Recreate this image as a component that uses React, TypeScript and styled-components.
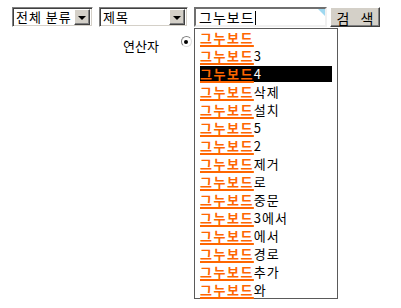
import React from "react";
import { styled, createGlobalStyle } from "styled-components";

const GlobalStyle = createGlobalStyle`
  html, body {
    margin: 0;
    padding: 0;
    background: #ffffff;
    font-family: "Noto Sans CJK KR", "Noto Sans", sans-serif;
    font-size: 12px;
    color: #000000;
  }
`;

const Page = styled.div`
  position: relative;
  width: 401px;
  height: 308px;
  overflow: hidden;
`;

const SearchBar = styled.div`
  display: flex;
  align-items: center;
  padding: 7px 0 0 12px;
  height: 20px;
`;

const SelectBox = styled.div<{ $width: number; $gap: number }>`
  display: flex;
  align-items: center;
  justify-content: space-between;
  box-sizing: border-box;
  width: ${({ $width }) => $width}px;
  height: 20px;
  margin-right: ${({ $gap }) => $gap}px;
  border: 1px solid;
  border-color: #808080 #ffffff #ffffff #808080;
  box-shadow: inset 1px 1px 0 #404040, inset -1px -1px 0 #d4d0c8;
  background: #ffffff;
  padding: 0 2px 0 3px;
  line-height: 16px;
  font-size: 13px;
  letter-spacing: 1px;
  white-space: nowrap;
`;

const ArrowButton = styled.span`
  display: flex;
  align-items: center;
  justify-content: center;
  box-sizing: border-box;
  width: 16px;
  height: 16px;
  background: #d4d0c8;
  border: 1px solid;
  border-color: #ffffff #404040 #404040 #ffffff;
  box-shadow: inset -1px -1px 0 #808080;

  &::after {
    content: "";
    border-left: 4px solid transparent;
    border-right: 4px solid transparent;
    border-top: 4px solid #000000;
    margin-top: 1px;
  }
`;

const QueryInput = styled.div`
  position: relative;
  box-sizing: border-box;
  width: 133px;
  height: 20px;
  margin-right: 3px;
  border: 2px solid;
  border-color: #6f6f6f #f0f0f0 #f0f0f0 #6f6f6f;
  background: #ffffff;
  padding: 0 3px;
  line-height: 16px;
  font-size: 14px;
  letter-spacing: 1px;

  &::after {
    content: "";
    position: absolute;
    top: 0;
    right: 0;
    border-top: 7px solid #9fd8f0;
    border-left: 7px solid transparent;
  }
`;

const Caret = styled.span`
  display: inline-block;
  width: 1px;
  height: 14px;
  background: #000000;
  vertical-align: -2px;
`;

const SearchButton = styled.button`
  box-sizing: border-box;
  width: 50px;
  height: 20px;
  padding: 0;
  background: #d4d0c8;
  border: 1px solid;
  border-color: #ffffff #404040 #404040 #ffffff;
  box-shadow: inset -1px -1px 0 #808080;
  font-family: inherit;
  font-size: 14px;
  letter-spacing: 4px;
  text-indent: 4px;
  color: #000000;
`;

const OperatorRow = styled.div`
  display: flex;
  align-items: center;
  gap: 22px;
  padding: 9px 0 0 123px;
  font-size: 13px;
`;

const Radio = styled.span`
  display: flex;
  align-items: center;
  justify-content: center;
  box-sizing: border-box;
  width: 11px;
  height: 11px;
  margin-top: -8px;
  border-radius: 50%;
  border: 1px solid;
  border-color: #808080 #e0e0e0 #e0e0e0 #808080;
  background: #ffffff;

  &::after {
    content: "";
    width: 4px;
    height: 4px;
    border-radius: 50%;
    background: #000000;
  }
`;

const Suggestions = styled.ul`
  position: absolute;
  left: 194px;
  top: 28px;
  box-sizing: border-box;
  width: 144px;
  height: 271px;
  margin: 0;
  padding: 1px 5px 0;
  list-style: none;
  background: #ffffff;
  border: 1px solid #5a5a5a;
`;

const Suggestion = styled.li<{ $active?: boolean }>`
  height: 16px;
  margin-bottom: 2px;
  line-height: 16px;
  font-size: 13px;
  letter-spacing: 1px;
  white-space: nowrap;
  background: ${({ $active }) => ($active ? "#000000" : "transparent")};
  color: ${({ $active }) => ($active ? "#ffffff" : "#000000")};
`;

const Match = styled.span`
  color: #ff6600;
  font-weight: bold;
  letter-spacing: 1.5px;
  text-decoration: underline;
  text-underline-offset: 2px;
  text-decoration-thickness: 2px;
`;

const suffixes = [
  "",
  "3",
  "4",
  "삭제",
  "설치",
  "5",
  "2",
  "제거",
  "로",
  "중문",
  "3에서",
  "에서",
  "경로",
  "추가",
  "와",
];

export default function App() {
  return (
    <Page>
      <GlobalStyle />
      <SearchBar>
        <SelectBox $width={81} $gap={6}>
          전체 분류
          <ArrowButton />
        </SelectBox>
        <SelectBox $width={89} $gap={6}>
          제목
          <ArrowButton />
        </SelectBox>
        <QueryInput>
          그누보드
          <Caret />
        </QueryInput>
        <SearchButton>검 색</SearchButton>
      </SearchBar>
      <OperatorRow>
        연산자
        <Radio />
      </OperatorRow>
      <Suggestions>
        {suffixes.map((s, i) => (
          <Suggestion key={i} $active={i === 2}>
            <Match>그누보드</Match>
            {s}
          </Suggestion>
        ))}
      </Suggestions>
    </Page>
  );
}
